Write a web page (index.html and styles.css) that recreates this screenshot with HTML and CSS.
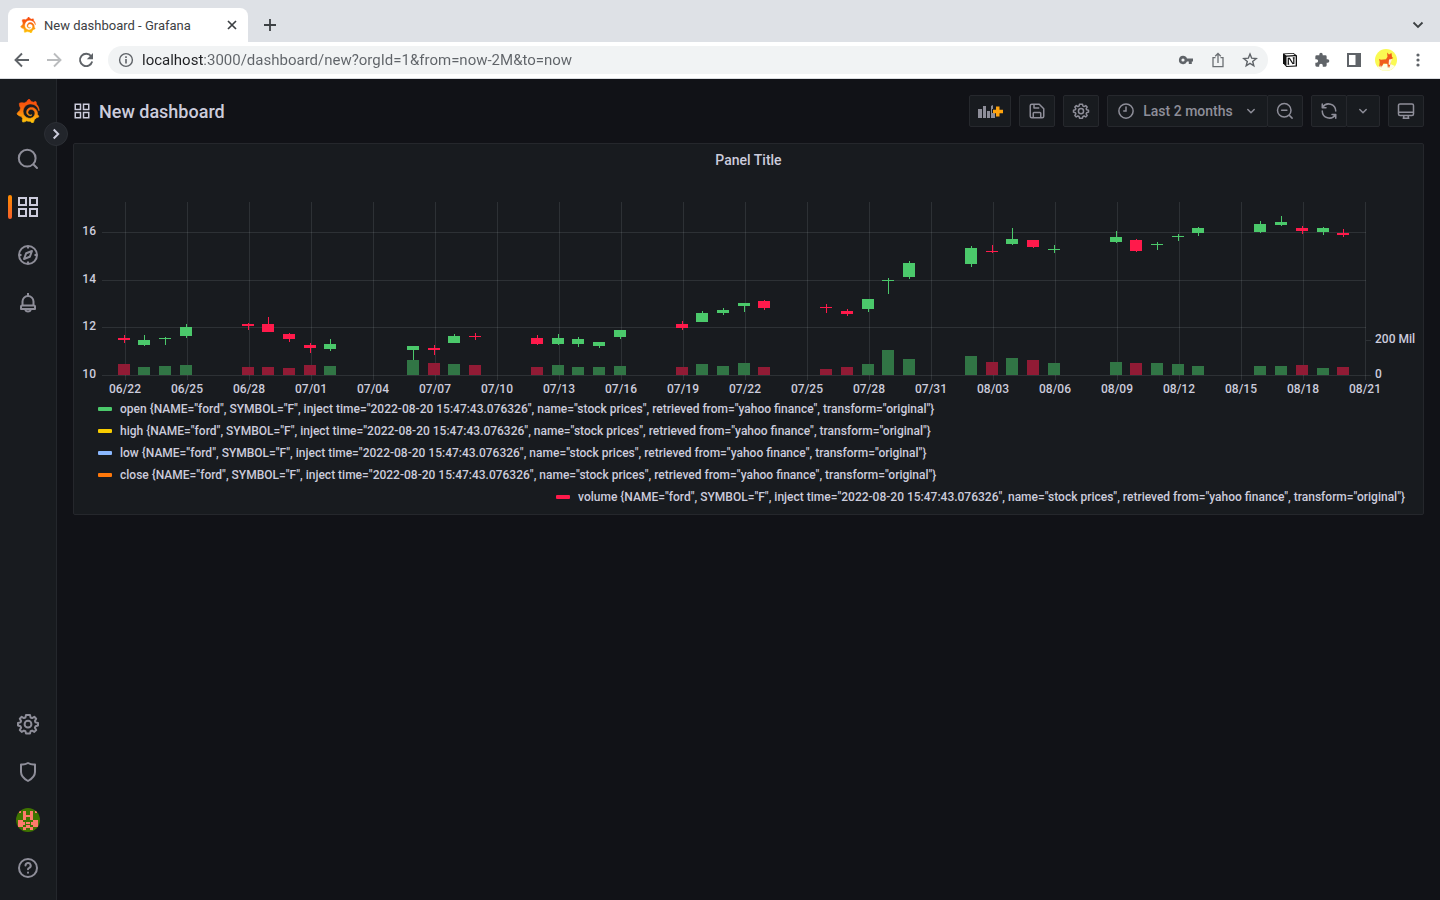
FILE: index.html
```html
<!DOCTYPE html>
<html lang="en">
<head>
<meta charset="utf-8">
<title>New dashboard - Grafana</title>
<link rel="stylesheet" href="styles.css">
</head>
<body>
<svg class="defs" aria-hidden="true">
  <defs>
    <linearGradient id="flame" x1="0" y1="0" x2="0" y2="1"><stop offset="0" stop-color="#f8460c"/><stop offset=".35" stop-color="#f9600d"/><stop offset="1" stop-color="#ffca0a"/></linearGradient>
    <symbol id="grafana" viewBox="0 0 24 24"><path fill="url(#flame)" stroke="url(#flame)" stroke-width=".6" d="M23.02 10.59a8.578 8.578 0 0 0-.862-3.034 8.911 8.911 0 0 0-1.789-2.445c.337-1.342-.413-2.505-.413-2.505-1.292-.08-2.113.4-2.416.62-.052-.02-.102-.044-.154-.064-.22-.089-.446-.172-.677-.247-.231-.073-.47-.14-.711-.197a9.867 9.867 0 0 0-.875-.161C14.557.753 12.94 0 12.94 0c-1.804 1.145-2.147 2.744-2.147 2.744l-.018.093c-.098.029-.2.057-.298.088-.138.042-.275.094-.413.143-.138.055-.275.107-.41.166a8.869 8.869 0 0 0-1.557.87l-.063-.029c-2.497-.955-4.716.195-4.716.195-.203 2.658.996 4.33 1.235 4.636a11.608 11.608 0 0 0-.607 2.635C1.636 12.677.953 15.014.953 15.014c1.926 2.214 4.171 2.351 4.171 2.351.003-.002.006-.002.006-.005.285.509.615.994.986 1.446.156.19.32.371.488.548-.704 2.009.099 3.68.099 3.68 2.144.08 3.553-.937 3.849-1.173a9.784 9.784 0 0 0 3.164.501h.08l.055-.003.107-.002.103-.005.003.002c1.01 1.44 2.788 1.646 2.788 1.646 1.264-1.332 1.337-2.653 1.337-2.94v-.058c0-.02-.003-.039-.003-.06.265-.187.52-.387.758-.6a7.875 7.875 0 0 0 1.415-1.7c1.43.083 2.437-.885 2.437-.885-.236-1.49-1.085-2.216-1.264-2.354l-.065-.046c.008-.092.016-.18.02-.27.011-.162.016-.323.016-.48v-.253l-.013-.233-.023-.255-.034-.246a6.215 6.215 0 0 0-2.032-3.73 6.015 6.015 0 0 0-3.222-1.46 6.292 6.292 0 0 0-.85-.048l-.107.002-.211.011a4.777 4.777 0 0 0-3.335 1.695c-.332.4-.592.84-.768 1.297a4.594 4.594 0 0 0-.312 1.817l.016.255a3.615 3.615 0 0 0 .698 1.82 3.53 3.53 0 0 0 1.827 1.282c.33.098.66.14.971.137l.239-.008.299-.034.109-.024a2.634 2.634 0 0 0 .914-.415l.085-.065a.248.248 0 0 0 .039-.35.244.244 0 0 0-.309-.06l-.078.042c-.09.044-.184.083-.283.116a2.476 2.476 0 0 1-.475.096l-.246.006-.273-.014a2.59 2.59 0 0 1-.724-.213 2.557 2.557 0 0 1-.667-.438 2.52 2.52 0 0 1-.805-1.475 2.306 2.306 0 0 1-.029-.444l.013-.236a3.163 3.163 0 0 1 1.352-2.29 3.12 3.12 0 0 1 .937-.43 2.946 2.946 0 0 1 .776-.101l.271.01a4.041 4.041 0 0 1 1.635.49 3.94 3.94 0 0 1 1.602 1.662 3.77 3.77 0 0 1 .397 1.414l.01.226-.01.382a6.195 6.195 0 0 1-.08.639 5.1 5.1 0 0 1-.267.927 5.31 5.31 0 0 1-.624 1.13 5.052 5.052 0 0 1-3.237 2.014 4.82 4.82 0 0 1-.649.066h-.326a6.607 6.607 0 0 1-1.716-.265 6.776 6.776 0 0 1-3.4-2.274 6.75 6.75 0 0 1-.746-1.15 6.616 6.616 0 0 1-.714-2.596l-.013-.505.003-.163c.008-.22.026-.45.054-.678a8.707 8.707 0 0 1 .28-1.355c.128-.444.286-.872.473-1.277a7.04 7.04 0 0 1 1.456-2.1 5.925 5.925 0 0 1 .953-.763c.169-.111.343-.213.524-.306l.411-.197a7.177 7.177 0 0 1 .714-.267l.589-.162.451-.093.475-.071.532-.05.482-.019a7.999 7.999 0 0 1 1.708.125 7.917 7.917 0 0 1 2.048.68 8.253 8.253 0 0 1 1.672 1.09l.179.155.337.319.159.164a8.671 8.671 0 0 1 1.41 1.978l.225.465.065.15a8.848 8.848 0 0 1 .45 1.34.19.19 0 0 0 .201.142.186.186 0 0 0 .172-.184c.01-.246.002-.532-.024-.856z"/></symbol>
    <symbol id="apps" viewBox="0 0 24 24"><path fill="none" stroke="currentColor" stroke-width="2" d="M3 3h7v7H3zM14 3h7v7h-7zM3 14h7v7H3zM14 14h7v7h-7z"/></symbol>
    <symbol id="cog" viewBox="0 0 24 24"><g fill="none" stroke="currentColor" stroke-width="2" stroke-linejoin="round"><path d="M10 3h4l.6 2.500 1.500.6 2.200-1.300 1.900 1.900-1.300 2.200.6 1.500L22 11v2.500l-2.500.8-.6 1.400 1.300 2.300-1.900 1.900-2.200-1.300-1.500.6L14 21.500h-4l-.6-2.300-1.500-.6-2.200 1.300L3.800 18l1.300-2.300-.6-1.400L2 13.500V11l2.500-.6.6-1.500-1.300-2.200 1.900-1.900 2.200 1.300 1.500-.6z"/><circle cx="12" cy="12.200" r="3.400"/></g></symbol>
    <symbol id="down" viewBox="0 0 24 24"><path fill="none" stroke="currentColor" stroke-width="2.500" stroke-linecap="round" stroke-linejoin="round" d="M6.500 9.500L12 15l5.500-5.500"/></symbol>
  </defs>
</svg>

<header class="browser">
  <div class="tabs">
    <div class="tab">
      <svg class="favicon"><use href="#grafana"/></svg>
      <span class="tab-title">New dashboard - Grafana</span>
      <button class="plain" aria-label="Close tab"><svg width="10" height="10" viewBox="0 0 10 10"><path d="M1 1l8 8M9 1l-8 8" stroke="#3c4043" stroke-width="1.700"/></svg></button>
    </div>
    <button class="plain new-tab" aria-label="New tab"><svg width="12" height="12" viewBox="0 0 12 12"><path d="M6 0v12M0 6h12" stroke="#3c4043" stroke-width="1.800"/></svg></button>
    <button class="plain tab-menu" aria-label="Search tabs"><svg width="12" height="8" viewBox="0 0 12 8"><path d="M1.500 1.500L6 6l4.500-4.500" fill="none" stroke="#3c4043" stroke-width="1.800"/></svg></button>
  </div>
  <div class="navbar">
    <button class="plain" aria-label="Back"><svg width="16" height="16" viewBox="0 0 16 16"><path d="M15 8H2M8 1.500L1.500 8 8 14.500" fill="none" stroke="#5f6368" stroke-width="1.900"/></svg></button>
    <button class="plain" aria-label="Forward"><svg width="16" height="16" viewBox="0 0 16 16"><path d="M1 8h13M8 1.500L14.500 8 8 14.500" fill="none" stroke="#babcbe" stroke-width="1.900"/></svg></button>
    <button class="plain" aria-label="Reload"><svg width="16" height="16" viewBox="0 0 16 16"><path d="M13.200 4.200A6.200 6.200 0 1 0 14.200 9.500" fill="none" stroke="#5f6368" stroke-width="1.900"/><path d="M15 1v6.200H8.800z" fill="#5f6368"/></svg></button>
    <div class="address">
      <svg width="16" height="16" viewBox="0 0 16 16"><circle cx="8" cy="8" r="6.400" fill="none" stroke="#5f6368" stroke-width="1.400"/><path d="M8 7v4.500M8 4.300v1.600" stroke="#5f6368" stroke-width="1.600"/></svg>
      <input class="url" type="text" aria-label="Address" value="localhost:3000/dashboard/new?orgId=1&amp;from=now-2M&amp;to=now">
      <button class="plain" aria-label="Passwords"><svg width="16" height="16" viewBox="0 0 16 16"><path fill="#5f6368" fill-rule="evenodd" d="M5 3.700a4.200 4.200 0 0 1 4 2.800h6v3h-1.200V12h-3V9.500H9A4.200 4.200 0 1 1 5 3.700zM5 6.400a1.600 1.600 0 1 0 0 3.200 1.600 1.600 0 0 0 0-3.200z"/></svg></button>
      <button class="plain" aria-label="Share"><svg width="16" height="16" viewBox="0 0 16 16"><path d="M5.500 5.700H3v9h10v-9h-2.500M8 11V1.800M5.200 4.300L8 1.500l2.800 2.800" fill="none" stroke="#6b6f73" stroke-width="1.300"/></svg></button>
      <button class="plain" aria-label="Bookmark"><svg width="16" height="16" viewBox="0 0 16 16"><path d="M8 2l1.700 4.200 4.500.3-3.500 2.900 1.100 4.400L8 11.400l-3.800 2.400 1.100-4.400-3.500-2.900 4.500-.3z" fill="none" stroke="#5f6368" stroke-width="1.400"/></svg></button>
    </div>
    <div class="extensions">
      <button class="plain" aria-label="Notion"><svg width="16" height="16" viewBox="0 0 16 16"><path d="M1 1.600L11.500 1 15 3.600v10.800l-10.600.6L1 11.200z" fill="#111"/><path d="M2.400 2.300l8.700-.5 1.700 1.200-8.500.6zM4.500 4.800l9.200-.5v9.300l-9.200.5z" fill="#fff"/><path d="M6.300 12.200V6.300M6 6.400h1.500l3.600 5.600M11.800 5.900v6.200M5.700 6.300h1.700M5.600 12.200h1.600M10.800 5.900h1.900" fill="none" stroke="#111" stroke-width="1.200"/></svg></button>
      <button class="plain" aria-label="Extensions"><svg width="16" height="16" viewBox="0 0 24 24"><path fill="#5f6368" d="M20.500 11H19V7a2 2 0 0 0-2-2h-4V3.500a2.500 2.500 0 0 0-5 0V5H4a2 2 0 0 0-2 2v3.800h1.500a2.700 2.700 0 0 1 0 5.400H2V20a2 2 0 0 0 2 2h3.800v-1.500a2.700 2.700 0 0 1 5.400 0V22H17a2 2 0 0 0 2-2v-4h1.500a2.500 2.500 0 0 0 0-5z"/></svg></button>
      <button class="plain" aria-label="Side panel"><svg width="16" height="16" viewBox="0 0 16 16"><path fill="#5f6368" fill-rule="evenodd" d="M1 1h14v14H1zM3 3v10h6.500V3z"/></svg></button>
      <button class="plain profile" aria-label="Profile"><svg width="22" height="22" viewBox="0 0 22 22"><circle cx="11" cy="11" r="11" fill="#fafa52"/><path d="M2.500 18Q11 12 20 17a11 11 0 0 1-17.500 1z" fill="#fdfde4"/><path d="M4 10l2 .8 5-.5 1.500-2.500L12 3.500l2 2L16.500 4l.5 4 1.300 1-2.200 1.200-.6 4.500-1 3.500-1.700-.2-.5-3.200-3.800-.2-1.700 3.200-2.500-.4.4-4.700z" fill="#f05a1c"/><path d="M14 10.500l3-.5-1 3-.8 3-1.600-.5z" fill="#fff1dc"/><path d="M12.500 17.500l2.200.3v1h-2.200zM5 16.500l2 .4-.4 1.500-1.800-.4z" fill="#f3c298"/></svg></button>
      <button class="plain" aria-label="Browser menu"><svg width="16" height="16" viewBox="0 0 16 16" fill="#5f6368"><circle cx="8" cy="3" r="1.600"/><circle cx="8" cy="8" r="1.600"/><circle cx="8" cy="13" r="1.600"/></svg></button>
    </div>
  </div>
</header>

<div class="app">
  <nav class="sidebar" aria-label="Main">
    <a class="side-link" href="#" aria-label="Home"><svg class="logo"><use href="#grafana"/></svg></a>
    <button class="expand" aria-label="Expand menu"><svg width="8" height="12" viewBox="0 0 8 12"><path d="M1.700 1.500L6.200 6l-4.500 4.500" fill="none" stroke="#ccccdc" stroke-width="2"/></svg></button>
    <a class="side-link" href="#" aria-label="Search"><svg class="icon-l" viewBox="0 0 24 24"><path fill="none" stroke="currentColor" stroke-width="2" stroke-linecap="round" d="M17.500 17.500l3.500 3.500M11.200 19.600a8.400 8.400 0 1 0 0-16.800 8.400 8.400 0 0 0 0 16.800z"/></svg></a>
    <a class="side-link active" href="#" aria-label="Dashboards"><svg class="icon-l"><use href="#apps"/></svg></a>
    <a class="side-link" href="#" aria-label="Explore"><svg class="icon-l" viewBox="0 0 24 24"><g fill="none" stroke="currentColor" stroke-width="2" stroke-linejoin="round"><circle cx="12" cy="12" r="9"/><path d="M16 8l-2.200 5.800L8 16l2.200-5.800zM12 3v2.500M12 18.500V21M3 12h2.500M18.500 12H21"/></g></svg></a>
    <a class="side-link" href="#" aria-label="Alerting"><svg class="icon-l" viewBox="0 0 24 24"><path fill="none" stroke="currentColor" stroke-width="2" stroke-linejoin="round" d="M12 2v3M6.500 14.500V10.500a5.500 5.500 0 0 1 11 0v4M6 14.500h12a1 1 0 0 1 1 1V18H5v-2.500a1 1 0 0 1 1-1zM9 18.500a3.200 3.200 0 0 0 6 0"/></svg></a>
    <span class="grow"></span>
    <a class="side-link" href="#" aria-label="Configuration"><svg class="icon-l"><use href="#cog"/></svg></a>
    <a class="side-link" href="#" aria-label="Server admin"><svg class="icon-l" viewBox="0 0 24 24"><path fill="none" stroke="currentColor" stroke-width="2" stroke-linejoin="round" d="M12 3Q15.500 5 19 4.400V12c0 4-2.500 6.500-7 9-4.500-2.500-7-5-7-9V4.400Q8.500 5 12 3z"/></svg></a>
    <a class="side-link" href="#" aria-label="Profile"><svg class="avatar" viewBox="0 0 24 24"><rect width="24" height="24" fill="#3f7400"/><path fill="#ff7b6b" d="M7 3h3v4h4V3h3v9h-3V9h-4v3H7zM3 3h2v2H3zM19 3h2v2h-2zM2 12h5v2h2v3H7v2H2zM17 12h5v7h-5v-2h-2v-3h2zM10 14h4v2h-4zM7 19h3v-2h4v2h3v3h-3v-2h-4v2H7z"/></svg></a>
    <a class="side-link" href="#" aria-label="Help"><svg class="icon-l" viewBox="0 0 24 24"><g fill="none" stroke="currentColor" stroke-width="2" stroke-linecap="round"><circle cx="12" cy="12" r="9"/><path d="M9.500 9.600a2.600 2.600 0 1 1 3.800 2.300Q12 12.500 12 13.300M12 16.600v.2"/></g></svg></a>
  </nav>

  <main class="main">
    <div class="toolbar">
      <svg class="icon title-icon"><use href="#apps"/></svg>
      <h1 class="title">New dashboard</h1>
      <span class="grow"></span>
      <button class="btn add" aria-label="Add panel"><svg width="25" height="16" viewBox="0 0 25 16"><path fill="currentColor" d="M0 6h4v9H0zM5 3h3v12H5zM9 8h3v7H9zM13 3l2-1v4h-1v4h3v5h-4z"/><path fill="#ffa30d" d="M18 3.500h3.500v3.300H25v3.400h-3.500v3.300H18v-3.300h-3V6.800h3z"/></svg></button>
      <button class="btn" aria-label="Save dashboard"><svg class="icon" viewBox="0 0 24 24"><path fill="none" stroke="currentColor" stroke-width="2" stroke-linejoin="round" d="M5 3h10l6 6v10a2 2 0 0 1-2 2H5a2 2 0 0 1-2-2V5a2 2 0 0 1 2-2zM8 3v5h7M7 21v-6a1 1 0 0 1 1-1h8a1 1 0 0 1 1 1v6"/></svg></button>
      <button class="btn" aria-label="Dashboard settings"><svg class="icon"><use href="#cog"/></svg></button>
      <div class="group">
        <button class="btn range"><svg class="icon" viewBox="0 0 24 24"><path fill="none" stroke="currentColor" stroke-width="2" stroke-linecap="round" d="M12 6.500V12H9M12 21.500a9.500 9.500 0 1 0 0-19 9.500 9.500 0 0 0 0 19z"/></svg><span>Last 2 months</span><svg class="caret"><use href="#down"/></svg></button>
        <button class="btn" aria-label="Zoom out"><svg class="icon" viewBox="0 0 24 24"><path fill="none" stroke="currentColor" stroke-width="2" stroke-linecap="round" d="M17.500 17.500l4 4M7.500 11h7M11 20a9 9 0 1 0 0-18 9 9 0 0 0 0 18z"/></svg></button>
      </div>
      <div class="group">
        <button class="btn" aria-label="Refresh"><svg class="icon" viewBox="0 0 24 24"><path fill="none" stroke="currentColor" stroke-width="2" stroke-linecap="round" stroke-linejoin="round" d="M3 2.500v5h5M3.500 7A9.500 9.500 0 0 1 21 12M21 21.500v-5h-5M20.500 17A9.500 9.500 0 0 1 3 12"/></svg></button>
        <button class="btn interval" aria-label="Refresh interval"><svg class="caret"><use href="#down"/></svg></button>
      </div>
      <button class="btn" aria-label="Cycle view mode"><svg class="icon" viewBox="0 0 24 24"><path fill="none" stroke="currentColor" stroke-width="2" stroke-linejoin="round" d="M4 2.500h16a2 2 0 0 1 2 2V16a2 2 0 0 1-2 2H4a2 2 0 0 1-2-2V4.500a2 2 0 0 1 2-2zM2 13.500h20M9 18v3M15 18v3M7.500 21.500h9"/></svg></button>
    </div>

    <section class="panel">
      <h2 class="panel-title">Panel Title</h2>
      <svg class="chart" id="chart" viewBox="74 176 1349 222" role="img" aria-label="Ford stock prices and volume"></svg>
      <ul class="legend">
        <li><i class="key green"></i>open {NAME="ford", SYMBOL="F", inject time="2022-08-20 15:47:43.076326", name="stock prices", retrieved from="yahoo finance", transform="original"}</li>
        <li><i class="key yellow"></i>high {NAME="ford", SYMBOL="F", inject time="2022-08-20 15:47:43.076326", name="stock prices", retrieved from="yahoo finance", transform="original"}</li>
        <li><i class="key blue"></i>low {NAME="ford", SYMBOL="F", inject time="2022-08-20 15:47:43.076326", name="stock prices", retrieved from="yahoo finance", transform="original"}</li>
        <li><i class="key orange"></i>close {NAME="ford", SYMBOL="F", inject time="2022-08-20 15:47:43.076326", name="stock prices", retrieved from="yahoo finance", transform="original"}</li>
        <li class="right"><i class="key red"></i>volume {NAME="ford", SYMBOL="F", inject time="2022-08-20 15:47:43.076326", name="stock prices", retrieved from="yahoo finance", transform="original"}</li>
      </ul>
    </section>
  </main>
</div>
<script src="chart.js"></script>
</body>
</html>
```

FILE: styles.css
```css
* { box-sizing: border-box; }
body {
  margin: 0;
  min-height: 100vh;
  display: flex;
  flex-direction: column;
  background: #111217;
  color: #ccccdc;
  font-family: Roboto, "Liberation Sans", sans-serif;
  font-size: 14px;
}
svg { display: block; flex: none; }
button { font: inherit; color: inherit; cursor: pointer; }
.defs { position: absolute; width: 0; height: 0; }
.grow { flex: 1; }
.plain { display: flex; padding: 0; border: 0; background: none; }

.browser { background: #fff; border-bottom: 1px solid #dadce0; }
.tabs { display: flex; align-items: center; height: 42px; padding: 8px 16px 0 8px; background: #dee1e6; }
.tab {
  display: flex; align-items: center; align-self: stretch; width: 240px;
  padding: 0 11px 0 12px; background: #fff; border-radius: 8px 8px 0 0;
  color: #3c4043; font-size: 13px;
}
.favicon { width: 16px; height: 16px; margin-right: 8px; }
.tab-title { flex: 1; }
.new-tab { margin-left: 16px; }
.tab-menu { margin-left: auto; }
.navbar { display: flex; align-items: center; gap: 16px; height: 36px; padding: 0 14px; }
.address {
  flex: 1; display: flex; align-items: center; gap: 16px; height: 28px;
  margin: 0 -2px; padding: 0 10px; border-radius: 14px; background: #f1f3f4;
}
.url {
  flex: 1; min-width: 0; height: 24px; margin-left: -8px; padding: 0; border: 0; outline: 0;
  font: 15px Roboto, sans-serif; color: transparent;
  background: linear-gradient(to right, #202124 62px, #5f6368 62px);
  -webkit-background-clip: text; background-clip: text;
}
.extensions { display: flex; align-items: center; gap: 16px; }
.profile { margin: 0 -3px; }

.app { flex: 1; display: flex; }
.sidebar {
  position: relative; display: flex; flex-direction: column; width: 57px;
  padding: 8px 0; background: #181b1f; border-right: 1px solid #24272c;
  color: #8e8e99;
}
.side-link { position: relative; display: flex; align-items: center; justify-content: center; height: 48px; color: inherit; }
.logo { width: 24px; height: 24px; }
.icon-l { width: 24px; height: 24px; }
.active { color: #ccccdc; }
.active::before {
  content: ""; position: absolute; left: 8px; top: 12px; width: 4px; height: 24px;
  border-radius: 2px; background: linear-gradient(#ff8c00, #f55f2c);
}
.avatar { width: 24px; height: 24px; border-radius: 50%; }
.expand {
  position: absolute; right: -12px; top: 43px; width: 24px; height: 24px; z-index: 1;
  display: flex; align-items: center; justify-content: center; padding: 0;
  border: 1px solid #2c2f35; border-radius: 50%; background: #22252b;
}

.main { flex: 1; min-width: 0; padding: 0 16px; }
.toolbar { display: flex; align-items: center; gap: 8px; height: 64px; }
.icon { width: 18px; height: 18px; }
.title { margin: 0; font-size: 18px; font-weight: 500; }
.btn {
  display: flex; align-items: center; justify-content: center; width: 36px; height: 32px; padding: 0;
  border: 1px solid #26282d; border-radius: 2px; background: #181b1f; color: #8e8e99;
}
.add { width: 42px; }
.group { display: flex; }
.group .btn + .btn { margin-left: -1px; }
.range { width: 161px; gap: 8px; font-weight: 500; }
.interval { width: 34px; }
.caret { width: 14px; height: 14px; }
.range .caret { margin-left: 3px; }

.panel { padding-bottom: 6px; border: 1px solid #25272c; border-radius: 2px; background: #181b1f; }
.panel-title { margin: 0; font-size: 14px; font-weight: 500; line-height: 32px; text-align: center; }
.chart { width: 100%; height: auto; }
.chart text { fill: #ccccdc; font: 500 12px Roboto, sans-serif; }
.legend { margin: 0; padding: 0 18px 0 24px; list-style: none; font-size: 12px; font-weight: 500; line-height: 22px; }
.legend li { display: flex; align-items: center; gap: 8px; }
.legend .right { justify-content: flex-end; }
.key { width: 14px; height: 4px; border-radius: 1px; }
.green { background: #4bc96b; }
.yellow { background: #f8cc00; }
.blue { background: #8ab8ff; }
.orange { background: #ff780a; }
.red { background: #ff1a4b; }
```

FILE: chart.js
```js
// Each candle: left, body top, body height, wick top, wick bottom, volume top, rising (1) or falling (0)
const candles = [
  [118,338,2,335,343,364,0],[138,340,5,335,346,367,1],[159,338,1,337,345,366,1],[180,327,9,324,338,365,1],
  [242,324,2,323,330,367,0],[262,324,8,317,332,367,0],[283,334,5,333,342,368,0],[304,345,3,343,353,365,0],
  [324,344,5,339,351,366,1],[407,346,4,346,360,360,1],[428,348,2,345,355,363,0],[448,336,7,334,343,364,1],
  [469,336,1,333,340,365,0],[531,338,6,335,345,367,0],[552,338,6,334,345,365,1],[572,339,5,337,347,367,1],
  [593,342,4,342,348,367,1],[614,330,7,330,339,366,1],[676,324,4,321,330,367,0],[696,313,9,311,322,364,1],
  [717,310,3,308,315,366,1],[738,303,3,303,312,363,1],[758,301,7,300,310,367,0],[820,307,1,304,313,369,0],
  [841,311,3,309,316,367,0],[862,299,10,299,312,364,1],[882,280,1,278,294,350,1],[903,263,14,261,279,359,1],
  [965,248,16,246,267,356,1],[986,251,1,245,253,362,0],[1006,239,5,228,245,358,1],[1027,240,7,240,248,360,0],
  [1048,249,1,245,253,363,1],[1110,237,5,231,243,362,1],[1130,240,11,239,252,363,0],[1151,244,1,242,250,363,1],
  [1172,236,1,234,241,364,1],[1192,228,5,227,236,366,1],[1254,224,8,221,233,366,1],[1275,222,3,216,226,366,1],
  [1296,228,3,226,234,365,0],[1317,228,4,227,235,368,1],[1337,233,2,229,237,367,0]
];
const dates = ["06/22","06/25","06/28","07/01","07/04","07/07","07/10","07/13","07/16","07/19","07/22",
  "07/25","07/28","07/31","08/03","08/06","08/09","08/12","08/15","08/18","08/21"];
const base = 375;
const rect = (x, y, w, h, fill) => `<rect x="${x}" y="${y}" width="${w}" height="${h}" fill="${fill}"/>`;
const text = (x, y, anchor, s) => `<text x="${x}" y="${y}" text-anchor="${anchor}">${s}</text>`;
const grid = "rgba(240,250,255,0.1)";
let out = "";
dates.forEach((d, i) => {
  const x = 125 + i * 62;
  out += rect(x, 202, 1, 178, grid) + text(x, 393, "middle", d);
});
[[16, 232], [14, 280], [12, 327], [10, base]].forEach(([v, y]) => {
  out += rect(102, y, 1264, 1, grid) + text(96, y + 3, "end", v);
});
out += rect(1366, 340, 5, 1, grid) + rect(1366, base, 5, 1, grid);
out += text(1375, 343, "start", "200 Mil") + text(1375, 378, "start", "0");
candles.forEach(([x, top, h, high, low, vol, up]) => {
  out += rect(x, vol, 12, base - vol, up ? "#317545" : "#911b35");
  out += rect(x + 6, high, 1, low - high, up ? "#4bc96b" : "#ff1a4b");
  out += rect(x, top, 12, h, up ? "#4bc96b" : "#ff1a4b");
});
document.getElementById("chart").innerHTML = out;
```
